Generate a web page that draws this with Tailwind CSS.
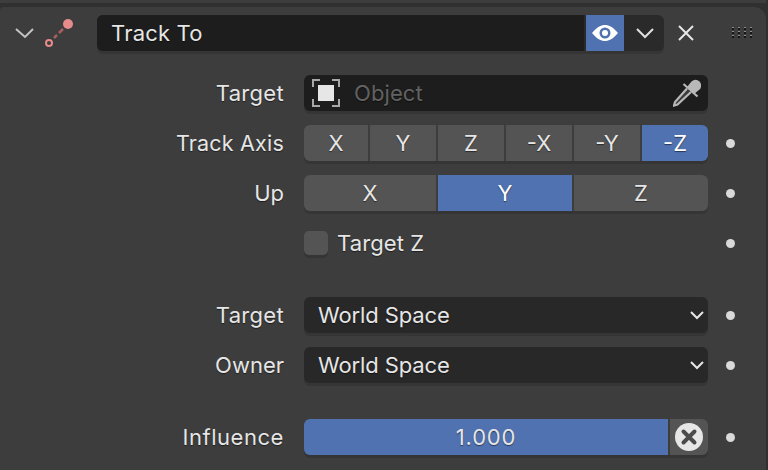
<!DOCTYPE html>
<html><head><meta charset="utf-8">
<script src="https://cdn.jsdelivr.net/npm/@tailwindcss/browser@4"></script></head>
<body class="m-0 w-[768px] h-[470px] overflow-hidden bg-[#303030] font-['Inter','Noto_Sans',sans-serif] text-[22px] text-[#e6e6e6] [text-shadow:0_1px_1px_#00000080]">
<div class="h-[3px] w-[766px] bg-[#3d3d3d]"></div>
<div class="mt-[4px] w-[766px] h-[463px] bg-[#3d3d3d] rounded-tl-[4px] rounded-tr-[12px] pt-[8px]">
  <!-- header -->
  <div class="flex h-[36px] items-center">
    <svg class="ml-[15px] w-[20px] h-[12px]" viewBox="0 0 20 12" fill="none" stroke="#c4c4c4" stroke-width="2"><path d="M1 2l9 8 8-8"/></svg>
    <svg class="ml-[9px] w-[34px] h-[36px]" viewBox="0 0 34 36" fill="none"><circle cx="24" cy="9" r="5" fill="#e68a8a"/><circle cx="5" cy="28" r="3" stroke="#e68a8a" stroke-width="2"/><path d="M10 23l3-3M15 18l4-4" stroke="#a85f5f" stroke-width="2.500"/></svg>
    <div class="ml-[19px] flex h-[36px] w-[567px] rounded-[6px] bg-[#2a2a2a] shadow-[0_3px_0_#353535] overflow-hidden">
      <div class="w-[487px] bg-[#1d1d1d] pl-[14px] leading-[36px] tracking-[0.2px]">Track To</div>
      <div class="ml-[2px] w-[38px] bg-[#5072b0] flex items-center justify-center">
        <svg class="w-[26px] h-[16px]" viewBox="0 0 26 16"><path fill="#fff" fill-rule="evenodd" d="M0 8C5 2 9 0 13 0s8 2 13 8c-5 6-9 8-13 8S5 14 0 8zm13-5.500a5.500 5.500 0 1 0 0 11 5.500 5.500 0 0 0 0-11z"/><circle cx="13" cy="8" r="3" fill="#fff"/></svg>
      </div>
      <div class="ml-[2px] flex-1 flex items-center justify-center">
        <svg class="w-[20px] h-[12px]" viewBox="0 0 20 12" fill="none" stroke="#e0e0e0" stroke-width="2"><path d="M2 2l8 8 8-8"/></svg>
      </div>
    </div>
    <svg class="ml-[13px] w-[18px] h-[18px]" viewBox="0 0 18 18" fill="none" stroke="#e6e6e6" stroke-width="2"><path d="M2 2l14 14M16 2L2 16"/></svg>
    <svg class="ml-[36px] w-[22px] h-[12px]" viewBox="0 0 22 12"><path fill="#151515" d="M1 1h2v2H1zM7 1h2v2H7zM13 1h2v2h-2zM19 1h2v2h-2zM1 5h2v2H1zM7 5h2v2H7zM13 5h2v2h-2zM19 5h2v2h-2zM1 9h2v2H1zM7 9h2v2H7zM13 9h2v2h-2zM19 9h2v2h-2z"/><path fill="#8c8c8c" d="M1 0h2v1H1zM7 0h2v1H7zM13 0h2v1h-2zM19 0h2v1h-2zM1 4h2v1H1zM7 4h2v1H7zM13 4h2v1h-2zM19 4h2v1h-2zM1 8h2v1H1zM7 8h2v1H7zM13 8h2v1h-2zM19 8h2v1h-2z"/></svg>
  </div>

  <!-- Target -->
  <div class="mt-[24px] flex h-[36px] items-center">
    <div class="w-[284px] text-right tracking-[0.3px]">Target</div>
    <div class="ml-[20px] w-[404px] h-[36px] rounded-[6px] bg-[#1d1d1d] shadow-[0_3px_0_#353535] flex items-center">
      <svg class="ml-[8px] w-[28px] h-[28px]" viewBox="0 0 28 28" fill="none"><path d="M1 8V1h7M20 1h7v7M27 20v7h-7M8 27H1v-7" stroke="#a8a8a8" stroke-width="2"/><rect x="6" y="6" width="16" height="16" fill="#e6e6e6"/></svg>
      <span class="ml-[14px] text-[#626262] tracking-[0.1px]">Object</span>
      <svg class="ml-auto mr-[7px] w-[28px] h-[28px]" viewBox="0 0 28 28"><path d="M14 8L18.500 2.500a5.500 5.500 0 0 1 8 8L21 15z" fill="#b8b8b8"/><path d="M10.500 5l14 12.500" stroke="#b8b8b8" stroke-width="2.200"/><path d="M14 9.500L2 23l-1 3.500 3.500-1L18 13" fill="#3a3a3a" stroke="#b8b8b8" stroke-width="2.200"/></svg>
    </div>
  </div>

  <!-- Track Axis -->
  <div class="mt-[14px] flex h-[36px] items-center">
    <div class="w-[284px] text-right text-[21.500px] tracking-[0.2px]">Track Axis</div>
    <div class="ml-[20px] w-[404px] h-[36px] flex gap-[2px] rounded-[6px] shadow-[0_3px_0_#353535] overflow-hidden text-center leading-[36px]">
      <div class="w-[64px] bg-[#545454]">X</div>
      <div class="w-[66px] bg-[#545454]">Y</div>
      <div class="w-[66px] bg-[#545454]">Z</div>
      <div class="w-[66px] bg-[#545454]">-X</div>
      <div class="w-[66px] bg-[#545454]">-Y</div>
      <div class="w-[66px] bg-[#5072b0] text-white">-Z</div>
    </div>
    <div class="ml-[18px] w-[9px] h-[9px] rounded-full bg-[#d9d9d9]"></div>
  </div>

  <!-- Up -->
  <div class="mt-[14px] flex h-[36px] items-center">
    <div class="w-[284px] text-right">Up</div>
    <div class="ml-[20px] w-[404px] h-[36px] flex gap-[2px] rounded-[6px] shadow-[0_3px_0_#353535] overflow-hidden text-center leading-[36px]">
      <div class="w-[132px] bg-[#545454]">X</div>
      <div class="w-[134px] bg-[#5072b0] text-white">Y</div>
      <div class="w-[134px] bg-[#545454]">Z</div>
    </div>
    <div class="ml-[18px] w-[9px] h-[9px] rounded-full bg-[#d9d9d9]"></div>
  </div>

  <!-- Target Z -->
  <div class="mt-[14px] flex h-[36px] items-center">
    <div class="ml-[304px] w-[24px] h-[24px] rounded-[5px] bg-[#545454] shadow-[0_3px_0_#353535]"></div>
    <div class="ml-[9px] w-[371px] tracking-[0.1px]">Target Z</div>
    <div class="ml-[18px] w-[9px] h-[9px] rounded-full bg-[#d9d9d9]"></div>
  </div>

  <!-- Spaces -->
  <div class="mt-[36px] flex h-[36px] items-center">
    <div class="w-[284px] text-right tracking-[0.3px]">Target</div>
    <div class="ml-[20px] w-[404px] h-[36px] rounded-[6px] bg-[#282828] shadow-[0_3px_0_#353535] flex items-center pl-[14px]">
      <span class="tracking-[-0.1px]">World Space</span>
      <svg class="ml-auto mr-[4px] w-[14px] h-[10px]" viewBox="0 0 14 10" fill="none" stroke="#e6e6e6" stroke-width="2"><path d="M1 2l6 6 6-6"/></svg>
    </div>
    <div class="ml-[18px] w-[9px] h-[9px] rounded-full bg-[#d9d9d9]"></div>
  </div>
  <div class="mt-[14px] flex h-[36px] items-center">
    <div class="w-[284px] text-right">Owner</div>
    <div class="ml-[20px] w-[404px] h-[36px] rounded-[6px] bg-[#282828] shadow-[0_3px_0_#353535] flex items-center pl-[14px]">
      <span class="tracking-[-0.1px]">World Space</span>
      <svg class="ml-auto mr-[4px] w-[14px] h-[10px]" viewBox="0 0 14 10" fill="none" stroke="#e6e6e6" stroke-width="2"><path d="M1 2l6 6 6-6"/></svg>
    </div>
    <div class="ml-[18px] w-[9px] h-[9px] rounded-full bg-[#d9d9d9]"></div>
  </div>

  <!-- Influence -->
  <div class="mt-[36px] flex h-[36px] items-center">
    <div class="w-[284px] text-right tracking-[0.55px]">Influence</div>
    <div class="ml-[20px] w-[404px] h-[36px] flex gap-[2px] rounded-[6px] shadow-[0_3px_0_#353535] overflow-hidden">
      <div class="w-[364px] bg-[#5072b0] text-center leading-[36px] tracking-[0.8px]">1.000</div>
      <div class="flex-1 bg-[#545454] flex items-center justify-center">
        <svg class="w-[28px] h-[28px]" viewBox="0 0 28 28"><circle cx="14" cy="14" r="14" fill="#e6e6e6"/><path d="M8.500 8.500l11 11M19.500 8.500l-11 11" stroke="#4a4a4a" stroke-width="4" stroke-linecap="round"/></svg>
      </div>
    </div>
    <div class="ml-[18px] w-[9px] h-[9px] rounded-full bg-[#d9d9d9]"></div>
  </div>
</div>
</body></html>
